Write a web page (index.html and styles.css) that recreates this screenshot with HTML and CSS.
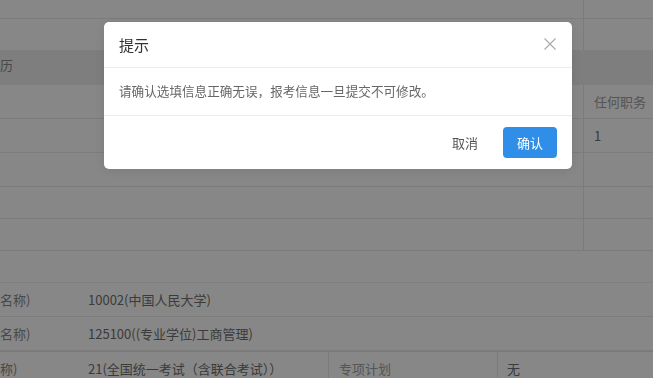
FILE: index.html
```html
<!DOCTYPE html>
<html lang="zh-CN">
<head>
  <meta charset="UTF-8" />
  <title>报考信息确认</title>
  <meta name="viewport" content="width=device-width, initial-scale=1.0" />
  <link rel="stylesheet" href="styles.css">
</head>
<body>
  <div class="sheet">
    <div class="row r-top"><div class="cell grow"></div><div class="cell side"></div></div>
    <div class="row r-blank"><div class="cell grow"></div><div class="cell side"></div></div>
    <div class="row r-head"><div class="cell grow head-text">历</div></div>
    <div class="row"><div class="cell grow"></div><div class="cell side th">任何职务</div></div>
    <div class="row"><div class="cell grow"></div><div class="cell side">1</div></div>
    <div class="row"><div class="cell grow"></div><div class="cell side"></div></div>
    <div class="row r-short"><div class="cell grow"></div><div class="cell side"></div></div>
    <div class="row r-short"><div class="cell grow"></div><div class="cell side"></div></div>
    <div class="row r-short r-part"><div class="cell grow"></div></div>

    <div class="row r-info">
      <div class="cell label">名称)</div>
      <div class="cell value">10002(中国人民大学)</div>
    </div>
    <div class="row r-info">
      <div class="cell label">名称)</div>
      <div class="cell value">125100((专业学位)工商管理)</div>
    </div>
    <div class="row r-info r-last">
      <div class="cell label">称)</div>
      <div class="cell value half">21(全国统一考试（含联合考试））</div>
      <div class="cell label2">专项计划</div>
      <div class="cell value2">无</div>
    </div>
  </div>

  <div class="mask">
    <div class="dialog">
      <div class="dialog-header">
        <span class="dialog-title">提示</span>
        <button class="dialog-close" aria-label="关闭">
          <svg width="12" height="12" viewBox="0 0 12 12">
            <path d="M0.5 0.5 L11.5 11.5 M11.5 0.5 L0.5 11.5" stroke="#a6a9ad" stroke-width="1.1" fill="none" />
          </svg>
        </button>
      </div>
      <div class="dialog-body">请确认选填信息正确无误，报考信息一旦提交不可修改。</div>
      <div class="dialog-footer">
        <button class="btn btn-text">取消</button>
        <button class="btn btn-primary">确认</button>
      </div>
    </div>
  </div>
</body>
</html>
```

FILE: styles.css
```css
html, body {
  margin: 0;
  height: 100%;
  overflow: hidden;
}
body {
  font-family: "Noto Sans CJK SC", "Noto Sans", sans-serif;
  font-size: 13px;
  color: #707070;
  background: #fff;
}

/* page under the mask */
.sheet {
  display: flex;
  flex-direction: column;
}
.row {
  display: flex;
  height: 33px;
  border-bottom: 1px solid #eaeaea;
}
.r-top { height: 18px; }
.r-blank { height: 31px; border-bottom: none; }
.r-head {
  height: 35px;
  background: #eeeeee;
  border-bottom: none;
}
.r-short { height: 31px; }
.r-part { border-bottom-color: #f0f0f0; }
.cell {
  display: flex;
  align-items: center;
  box-sizing: border-box;
  white-space: nowrap;
}
.grow { flex: 1; }
.side {
  width: 70px;
  padding-left: 10px;
  border-left: 1px solid #e8e8e8;
}
.th { color: #a0a0a0; }
.head-text {
  padding-bottom: 6px;
  color: #8a8a8a;
  font-size: 13px;
}
.r-info { height: 33px; }
.r-last { border-top: 1px solid #e4e4e4; }
.label {
  width: 78px;
  color: #8a8a8a;
}
.value {
  flex: 1;
  padding-left: 10px;
}
.value.half {
  flex: none;
  width: 250px;
}
.label2 {
  width: 169px;
  padding-left: 10px;
  border-left: 1px solid #e8e8e8;
  color: #a0a0a0;
}
.value2 {
  flex: 1;
  padding-left: 9px;
  border-left: 1px solid #e8e8e8;
}

/* message box */
.mask {
  position: fixed;
  inset: 0;
  background: rgba(0, 0, 0, 0.47);
  padding: 22px 0 0 104px;
}
.dialog {
  width: 468px;
  background: #fff;
  border-radius: 5px;
  box-shadow: 0 2px 12px rgba(0, 0, 0, 0.1);
}
.dialog-header {
  display: flex;
  align-items: center;
  justify-content: space-between;
  height: 44px;
  padding: 0 15px 1px;
  border-bottom: 1px solid #ebebeb;
}
.dialog-title {
  font-size: 15px;
  color: #303133;
}
.dialog-close {
  border: none;
  background: none;
  padding: 0;
  margin-right: 1px;
  display: flex;
  cursor: pointer;
}
.dialog-body {
  height: 48px;
  box-sizing: border-box;
  display: flex;
  align-items: center;
  padding: 0 15px 3px;
  font-size: 12.6px;
  color: #666;
  border-bottom: 1px solid #ebebeb;
}
.dialog-footer {
  display: flex;
  justify-content: flex-end;
  align-items: center;
  gap: 12px;
  height: 53px;
  padding: 0 15px;
}
.btn {
  font-family: inherit;
  font-size: 13px;
  border: none;
  border-radius: 4px;
  height: 31px;
  cursor: pointer;
}
.btn-text {
  background: none;
  color: #555;
  padding: 0 13px;
}
.btn-primary {
  width: 54px;
  padding: 0;
  background: #2f8fe8;
  color: #fff;
}
.btn-primary:hover {
  background: #4a9ff0;
}
```
